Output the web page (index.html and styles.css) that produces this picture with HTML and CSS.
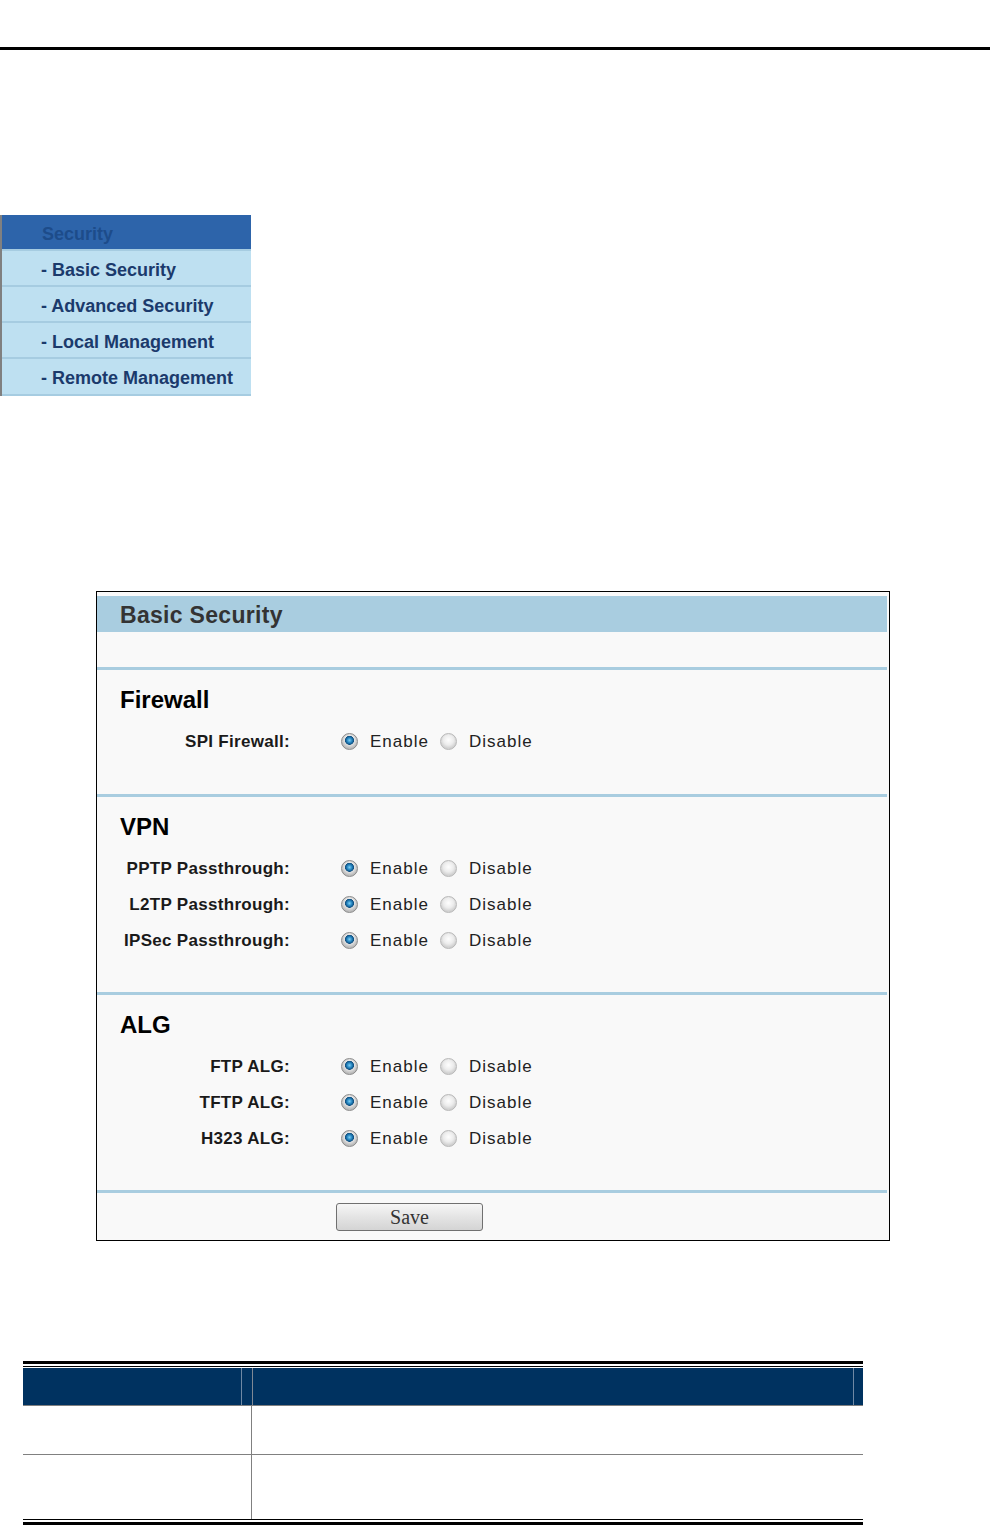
FILE: index.html
```html
<!DOCTYPE html>
<html lang="en">
<head>
  <meta charset="UTF-8">
  <meta name="viewport" content="width=device-width, initial-scale=1.0">
  <title>Basic Security</title>
  <link rel="stylesheet" href="styles.css">
</head>
<body>

<div class="page-rule"></div>

<!-- Menu lateral -->
<ul class="menu">
  <li class="menu-head">Security</li>
  <li class="menu-item">- Basic Security</li>
  <li class="menu-item">- Advanced Security</li>
  <li class="menu-item">- Local Management</li>
  <li class="menu-item">- Remote Management</li>
</ul>

<form class="panel" id="basicSecurity">
  <div class="panel-title">Basic Security</div>
  <div class="panel-blank"></div>

  <div class="section first">
    <h2>Firewall</h2>
    <div class="row">
      <span class="row-label">SPI Firewall:</span>
      <input type="radio" name="spi" id="spi1" checked><label for="spi1">Enable</label>
      <input type="radio" name="spi" id="spi0"><label for="spi0">Disable</label>
    </div>
  </div>

  <div class="section">
    <h2>VPN</h2>
    <div class="row">
      <span class="row-label">PPTP Passthrough:</span>
      <input type="radio" name="pptp" id="pptp1" checked><label for="pptp1">Enable</label>
      <input type="radio" name="pptp" id="pptp0"><label for="pptp0">Disable</label>
    </div>
    <div class="row">
      <span class="row-label">L2TP Passthrough:</span>
      <input type="radio" name="l2tp" id="l2tp1" checked><label for="l2tp1">Enable</label>
      <input type="radio" name="l2tp" id="l2tp0"><label for="l2tp0">Disable</label>
    </div>
    <div class="row">
      <span class="row-label">IPSec Passthrough:</span>
      <input type="radio" name="ipsec" id="ipsec1" checked><label for="ipsec1">Enable</label>
      <input type="radio" name="ipsec" id="ipsec0"><label for="ipsec0">Disable</label>
    </div>
  </div>

  <div class="section">
    <h2>ALG</h2>
    <div class="row">
      <span class="row-label">FTP ALG:</span>
      <input type="radio" name="ftp" id="ftp1" checked><label for="ftp1">Enable</label>
      <input type="radio" name="ftp" id="ftp0"><label for="ftp0">Disable</label>
    </div>
    <div class="row">
      <span class="row-label">TFTP ALG:</span>
      <input type="radio" name="tftp" id="tftp1" checked><label for="tftp1">Enable</label>
      <input type="radio" name="tftp" id="tftp0"><label for="tftp0">Disable</label>
    </div>
    <div class="row">
      <span class="row-label">H323 ALG:</span>
      <input type="radio" name="h323" id="h3231" checked><label for="h3231">Enable</label>
      <input type="radio" name="h323" id="h3230"><label for="h3230">Disable</label>
    </div>
  </div>

  <div class="panel-foot">
    <button type="button">Save</button>
  </div>
</form>

<!-- Tabla de descripcion (vacia) -->
<div class="doc-table">
  <div class="thin-rule"></div>
  <div class="doc-head">
    <div class="head-a"></div>
    <div class="head-b"></div>
  </div>
  <div class="doc-row row-short">
    <div class="cell-a"></div>
    <div class="cell-b"></div>
  </div>
  <div class="doc-row row-tall">
    <div class="cell-a"></div>
    <div class="cell-b"></div>
  </div>
  <div class="bottom-rule"></div>
</div>

</body>
</html>
```

FILE: styles.css
```css
body {
  margin: 0;
  background: #fff;
  font-family: "Liberation Sans", Arial, sans-serif;
}
.page-rule {
  margin-top: 47px;
  height: 3px;
  background: #000;
}

/* Menu */
.menu {
  list-style: none;
  margin: 165px 0 0 0;
  padding: 0;
  width: 249px;
  border-left: 2px solid #808080;
  background: #bee0f1;
}
.menu-head {
  height: 34px;
  line-height: 38px;
  padding-left: 40px;
  background: #2d64aa;
  border-bottom: 2px solid #a6cce1;
  color: #1d4c8a;
  font-weight: bold;
  font-size: 18px;
}
.menu-item {
  box-sizing: border-box;
  height: 36px;
  line-height: 38px;
  padding-left: 39px;
  border-bottom: 2px solid #a6cce1;
  color: #1b3a6c;
  font-weight: bold;
  font-size: 18px;
}
.menu-item:last-child {
  height: 37px;
}

/* Panel */
.panel {
  margin: 195px 0 0 96px;
  width: 790px;
  border: 1px solid #000;
  background: #f9f9f9;
  padding: 4px 2px 0 0;
}
.panel-title {
  height: 36px;
  line-height: 38px;
  padding-left: 23px;
  background: #a9cde0;
  color: #333;
  font-size: 23px;
  font-weight: bold;
  letter-spacing: 0.3px;
}
.panel-blank {
  height: 35px;
}
.section {
  border-top: 3px solid #a9cde0;
  padding: 12px 0 34px;
}
.section.first {
  padding-bottom: 35px;
}
.section h2 {
  margin: 0 0 5px;
  height: 36px;
  line-height: 36px;
  padding-left: 23px;
  font-size: 24px;
  color: #000;
}
.row {
  display: flex;
  align-items: center;
  height: 36px;
  padding-top: 1px;
  box-sizing: border-box;
  font-size: 17px;
  color: #222;
}
.row-label {
  width: 193px;
  text-align: right;
  font-weight: bold;
  letter-spacing: 0.3px;
  color: #1a1a1a;
}
.row label {
  letter-spacing: 1px;
}
.row input[type="radio"] {
  -webkit-appearance: none;
  appearance: none;
  box-sizing: border-box;
  width: 17px;
  height: 17px;
  margin: 0 12px 0 11px;
  border: 1px solid #b8b8b8;
  border-radius: 50%;
  background: radial-gradient(circle at 50% 40%, #fefefe 0, #ececec 5px, #d2d2d2 8px);
}
.row .row-label + input[type="radio"] {
  margin-left: 51px;
}
.row input[type="radio"]:checked {
  border-color: #8a8a8a;
  background:
    radial-gradient(circle at 50% 42%, #7fd0f5 0, #2585c0 2.5px, #0f4f80 4.2px, rgba(0, 0, 0, 0) 4.8px),
    radial-gradient(circle at 50% 40%, #ffffff 0, #e2e2e2 5px, #bdbdbd 8px);
}

.panel-foot {
  border-top: 3px solid #a9cde0;
  height: 50px;
  box-sizing: border-box;
  padding: 10px 0 0 239px;
}
.panel-foot button {
  width: 147px;
  height: 28px;
  border: 1px solid #707070;
  border-radius: 3px;
  background: linear-gradient(#f6f6f6, #e4e4e4 50%, #d4d4d4);
  font-family: "Liberation Serif", "Times New Roman", serif;
  font-size: 20px;
  color: #333;
  padding: 0;
  cursor: pointer;
}

/* Tabla */
.doc-table {
  margin: 120px 0 0 23px;
  width: 840px;
  border-top: 3px solid #000;
  padding-top: 2px;
}
.thin-rule {
  height: 1px;
  background: #000;
  margin-bottom: 1px;
}
.doc-head {
  display: flex;
  height: 37px;
  background: #003260;
  border-bottom: 1px solid #808080;
}
.head-a {
  width: 218px;
  border-right: 1px solid #6f88a4;
  margin-right: 10px;
}
.head-b {
  width: 600px;
  border-left: 1px solid #7f8894;
  border-right: 1px solid #6f88a4;
}
.doc-row {
  display: grid;
  grid-template-columns: 229px 611px;
}
.row-short {
  height: 48px;
  border-bottom: 1px solid #808080;
}
.row-tall {
  height: 64px;
}
.cell-a {
  border-right: 1px solid #808080;
}
.bottom-rule {
  height: 2px;
  border-top: 1px solid #000;
  border-bottom: 3px solid #000;
}
```
